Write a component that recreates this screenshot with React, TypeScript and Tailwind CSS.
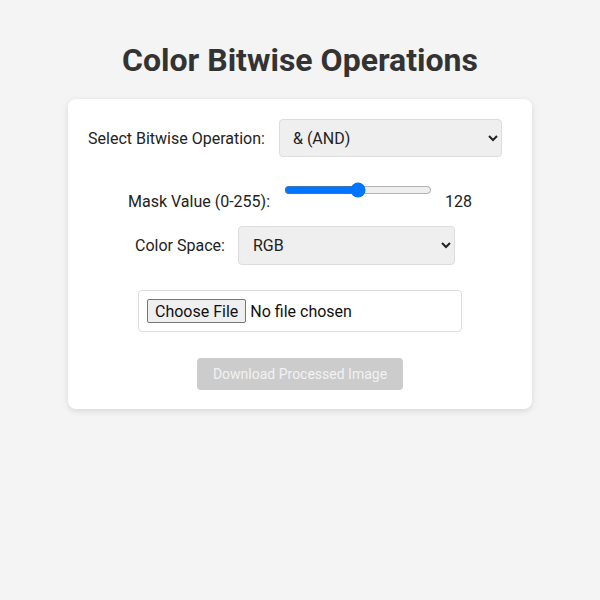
export default function App() {
  return (
    <div className="min-h-[600px] w-full bg-[#f4f4f4] text-[#333]" style={{ fontFamily: "Roboto, 'Liberation Sans', sans-serif" }}>
      <div className="flex flex-col items-center pt-[41px]">
        <h1 className="text-[32px] font-bold leading-[38px] text-[#333]">Color Bitwise Operations</h1>
        <div className="mt-[20px] w-[464px] rounded-lg bg-white shadow-[0_2px_6px_rgba(0,0,0,0.12)] px-[20px] pt-[20px] pb-[19px]">
          <div className="flex items-center justify-center pr-[10px] h-[38px]">
            <label className="mt-[2px] text-[16px] leading-[24px] text-[#222]">Select Bitwise Operation:</label>
            <select className="ml-[14px] h-[38px] w-[223px] rounded-[4px] border border-[#ddd] bg-[#efefef] px-[9px] text-[16px] text-[#222]">
              <option>&amp; (AND)</option>
              <option>| (OR)</option>
              <option>^ (XOR)</option>
            </select>
          </div>
          <div className="mt-[25px] flex items-end justify-center h-[32px]">
            <label className="text-[16px] leading-[24px] text-[#222]">Mask Value (0-255):</label>
            <input type="range" min={0} max={255} defaultValue={128} className="ml-[14px] mb-[16px] w-[148px] h-[16px] accent-[#0075ff]" />
            <span className="ml-[13px] text-[16px] leading-[24px] text-[#222]">128</span>
          </div>
          <div className="mt-[12px] flex items-center justify-center pr-[10px] h-[39px]">
            <label className="text-[16px] leading-[24px] text-[#222]">Color Space:</label>
            <select className="ml-[13px] h-[39px] w-[217px] rounded-[4px] border border-[#ddd] bg-[#efefef] px-[10px] text-[16px] text-[#222]">
              <option>RGB</option>
              <option>HSV</option>
              <option>LAB</option>
            </select>
          </div>
          <div className="mt-[25px] flex justify-center">
            <div className="w-[324px] h-[42px] rounded-[4px] border border-[#ddd] bg-white px-[8px] flex items-center">
              <input type="file" className="text-[16px] text-[#111] file:mr-[4px] file:h-[24px] file:rounded-[2px] file:border file:border-[#767676] file:bg-[#efefef] file:px-[7px] file:text-[16px] file:text-[#111]" />
            </div>
          </div>
          <div className="mt-[26px] flex justify-center">
            <button disabled className="h-[32px] w-[206px] rounded-[4px] bg-[#ccc] text-[14px] text-[#f2f2f2]">Download Processed Image</button>
          </div>
        </div>
      </div>
    </div>
  );
}
